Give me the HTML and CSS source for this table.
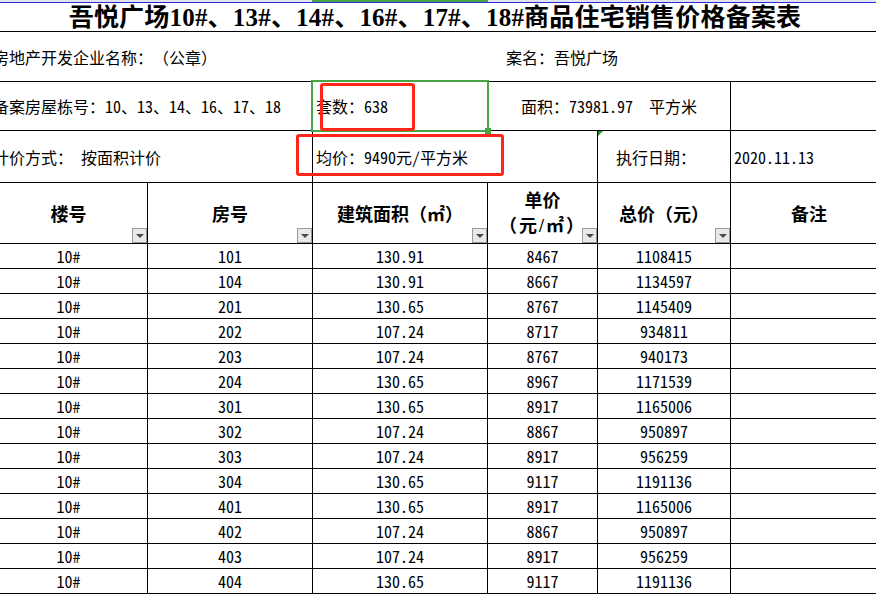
FILE: index.html
```html
<!DOCTYPE html>
<html lang="zh-CN">
<head>
<meta charset="utf-8">
<title>吾悦广场商品住宅销售价格备案表</title>
<link rel="stylesheet" href="styles.css">
</head>
<body>
<div class="page">
  <div class="topbar"><span class="colsel"></span></div>
  <div class="sheet">
    <div class="title">吾悦广场10#、13#、14#、16#、17#、18#商品住宅销售价格备案表</div>

    <div class="row r1">
      <div class="c ac">房地产开发企业名称：（公章）</div>
      <div class="c df name">案名：吾悦广场</div>
    </div>

    <div class="row r2">
      <div class="c ab bl">备案房屋栋号：10、13、14、16、17、18</div>
      <div class="c bl">套数：638</div>
      <div class="c de bl center">面积：73981.97&nbsp;&nbsp;平方米</div>
      <div class="c"></div>
    </div>

    <div class="row r3">
      <div class="c ab bl">计价方式：&nbsp;按面积计价</div>
      <div class="c cd bl">均价：9490元/平方米</div>
      <div class="c bl date-label">执行日期：</div>
      <div class="c">2020.11.13</div>
    </div>

    <div class="row head">
      <div class="c bl h">楼号<span class="flt"></span></div>
      <div class="c bl h">房号<span class="flt"></span></div>
      <div class="c bl h">建筑面积（㎡）<span class="flt"></span></div>
      <div class="c bl h two">单价<br><span class="unit">（元/㎡）</span><span class="flt"></span></div>
      <div class="c bl h">总价（元）<span class="flt"></span></div>
      <div class="c h">备注</div>
    </div>

    <div class="row d"><div class="c bl">10#</div><div class="c bl">101</div><div class="c bl">130.91</div><div class="c bl">8467</div><div class="c bl">1108415</div><div class="c"></div></div>
    <div class="row d"><div class="c bl">10#</div><div class="c bl">104</div><div class="c bl">130.91</div><div class="c bl">8667</div><div class="c bl">1134597</div><div class="c"></div></div>
    <div class="row d"><div class="c bl">10#</div><div class="c bl">201</div><div class="c bl">130.65</div><div class="c bl">8767</div><div class="c bl">1145409</div><div class="c"></div></div>
    <div class="row d"><div class="c bl">10#</div><div class="c bl">202</div><div class="c bl">107.24</div><div class="c bl">8717</div><div class="c bl">934811</div><div class="c"></div></div>
    <div class="row d"><div class="c bl">10#</div><div class="c bl">203</div><div class="c bl">107.24</div><div class="c bl">8767</div><div class="c bl">940173</div><div class="c"></div></div>
    <div class="row d"><div class="c bl">10#</div><div class="c bl">204</div><div class="c bl">130.65</div><div class="c bl">8967</div><div class="c bl">1171539</div><div class="c"></div></div>
    <div class="row d"><div class="c bl">10#</div><div class="c bl">301</div><div class="c bl">130.65</div><div class="c bl">8917</div><div class="c bl">1165006</div><div class="c"></div></div>
    <div class="row d"><div class="c bl">10#</div><div class="c bl">302</div><div class="c bl">107.24</div><div class="c bl">8867</div><div class="c bl">950897</div><div class="c"></div></div>
    <div class="row d"><div class="c bl">10#</div><div class="c bl">303</div><div class="c bl">107.24</div><div class="c bl">8917</div><div class="c bl">956259</div><div class="c"></div></div>
    <div class="row d"><div class="c bl">10#</div><div class="c bl">304</div><div class="c bl">130.65</div><div class="c bl">9117</div><div class="c bl">1191136</div><div class="c"></div></div>
    <div class="row d"><div class="c bl">10#</div><div class="c bl">401</div><div class="c bl">130.65</div><div class="c bl">8917</div><div class="c bl">1165006</div><div class="c"></div></div>
    <div class="row d"><div class="c bl">10#</div><div class="c bl">402</div><div class="c bl">107.24</div><div class="c bl">8867</div><div class="c bl">950897</div><div class="c"></div></div>
    <div class="row d"><div class="c bl">10#</div><div class="c bl">403</div><div class="c bl">107.24</div><div class="c bl">8917</div><div class="c bl">956259</div><div class="c"></div></div>
    <div class="row d"><div class="c bl">10#</div><div class="c bl">404</div><div class="c bl">130.65</div><div class="c bl">9117</div><div class="c bl">1191136</div><div class="c"></div></div>
  </div>

  <div class="sel"><span class="handle"></span></div>
  <div class="err"></div>
  <div class="mark mark1"></div>
  <div class="mark mark2"></div>
</div>
</body>
</html>
```

FILE: styles.css
```css
html, body {
  margin: 0;
  padding: 0;
  background: #fff;
}
body {
  width: 876px;
  height: 594px;
  overflow: hidden;
  font-family: "Noto Sans Mono CJK SC", "Noto Sans CJK SC", sans-serif;
  font-size: 16px;
  color: #000;
  text-spacing-trim: space-all;
}
.page {
  position: relative;
  width: 876px;
  height: 594px;
  overflow: hidden;
}
.topbar {
  height: 2px;
  background: #e2e4ea;
  border-bottom: 1px solid #2a2ad6;
  position: relative;
}
.colsel {
  position: absolute;
  left: 312px;
  top: 0;
  width: 176px;
  height: 2px;
  background: #44a544;
}
.sheet {
  margin-left: -10px;
  width: 897px;
}
.title {
  height: 28px;
  border-bottom: 1px solid #000;
  text-align: center;
  font-family: "Liberation Serif", "Noto Sans CJK SC", serif;
  font-weight: bold;
  font-size: 25px;
  letter-spacing: 0.2px;
  line-height: 29px;
  padding-right: 7px;
  white-space: nowrap;
}
.row {
  display: grid;
  grid-template-columns: 158px 165px 175px 110px 133px 156px;
  border-bottom: 1px solid #000;
  box-sizing: border-box;
}
.c {
  box-sizing: border-box;
  display: flex;
  align-items: center;
  white-space: nowrap;
  padding-left: 3px;
  position: relative;
  overflow: visible;
}
.bl { border-right: 1px solid #000; }
.center { justify-content: center; padding-left: 0; }
.r1 { height: 50px; }
.r2 { height: 49px; }
.r3 { height: 52px; }
.ac { grid-column: 1 / 4; }
.df { grid-column: 4 / 7; }
.ab { grid-column: 1 / 3; }
.de { grid-column: 4 / 6; }
.cd { grid-column: 3 / 5; }
.name { padding-left: 18px; }
.date-label { padding-left: 18px; }
.head { height: 61px; }
.h {
  justify-content: center;
  padding-left: 0;
  padding-top: 5px;
  font-family: "Liberation Serif", "Noto Sans CJK SC", serif;
  font-weight: bold;
  font-size: 18px;
  text-align: center;
  line-height: 25px;
}
.two {
  display: block;
  padding-top: 6px;
}
.unit { letter-spacing: 2px; }
.d { height: 25px; }
.d .c { justify-content: center; padding-left: 0; }
.flt {
  position: absolute;
  right: 0;
  bottom: 0;
  width: 15px;
  height: 15px;
  box-sizing: border-box;
  border: 1px solid #9a9aa0;
  background: #e9e9ec;
}
.flt::after {
  content: "";
  position: absolute;
  left: 3px;
  top: 5px;
  border-left: 4px solid transparent;
  border-right: 4px solid transparent;
  border-top: 4px solid #4a4a4a;
}
.sel {
  position: absolute;
  left: 311px;
  top: 80px;
  width: 178px;
  height: 52px;
  box-sizing: border-box;
  border: 2px solid #46a646;
}
.handle {
  position: absolute;
  right: -4px;
  bottom: -4px;
  width: 6px;
  height: 6px;
  background: #46a646;
}
.err {
  position: absolute;
  left: 598px;
  top: 131px;
  width: 0;
  height: 0;
  border-top: 5px solid #2e8b2e;
  border-right: 5px solid transparent;
}
.mark {
  position: absolute;
  box-sizing: border-box;
  border: 3px solid #ff2618;
  border-radius: 3px;
}
.mark1 { left: 320px; top: 83px; width: 95px; height: 48px; }
.mark2 { left: 296px; top: 134px; width: 208px; height: 42px; }
```
